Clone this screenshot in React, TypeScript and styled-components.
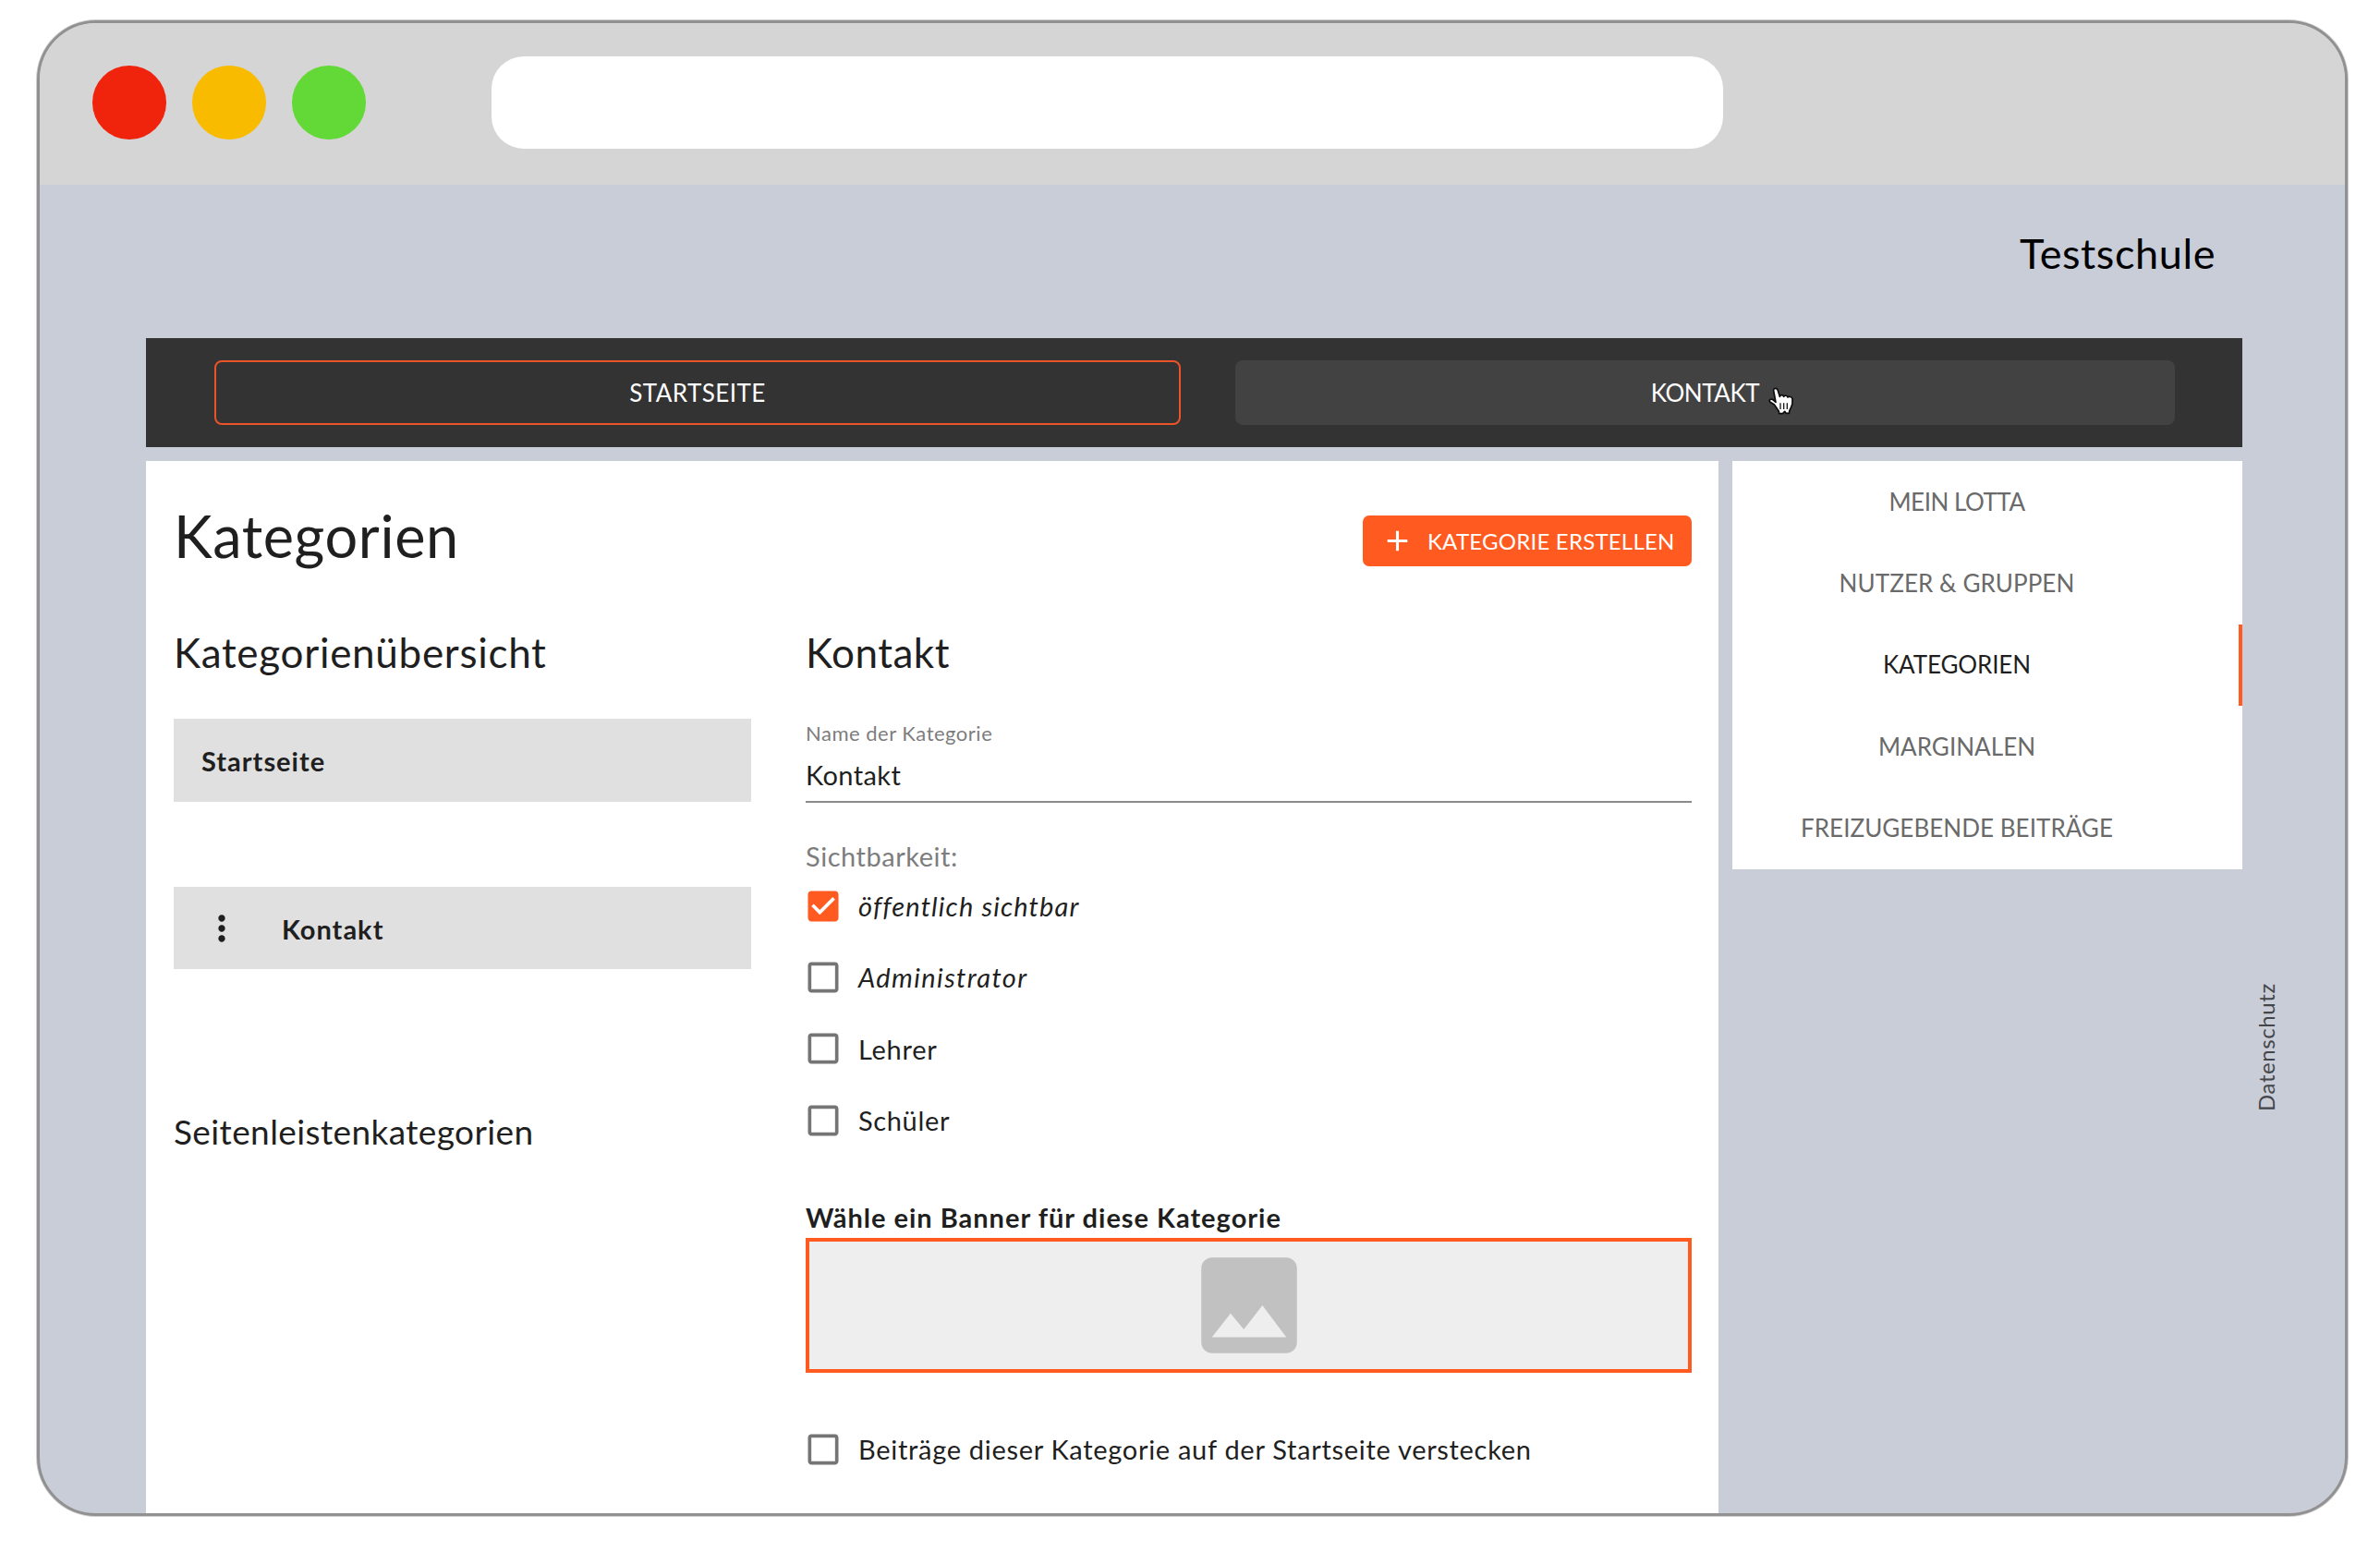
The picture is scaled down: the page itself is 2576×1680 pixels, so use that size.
import React from "react";
import styled, { createGlobalStyle } from "styled-components";

const orange = "#ff5a1f";
const ink = "#1f1f1f";

const GlobalStyle = createGlobalStyle`
  * { box-sizing: border-box; }
  body {
    margin: 0;
    background: #fff;
    color: ${ink};
    font-family: Lato, "Open Sans", sans-serif;
  }
  h1, h2, h3, p { margin: 0; font-weight: 400; }
`;

const Page = styled.div`
  width: 2576px;
  height: 1680px;
  padding: 22px 0 0 40px;
  overflow: hidden;
`;

const BrowserWindow = styled.div`
  width: 2501px;
  height: 1619px;
  display: flex;
  flex-direction: column;
  overflow: hidden;
  border: 3px solid #919191;
  border-radius: 64px;
  box-shadow: 0 0 0 1px #cfcfcf;
  background: #c9cdd8;
`;

const TitleBar = styled.header`
  flex: none;
  height: 175px;
  display: flex;
  align-items: center;
  gap: 28.5px;
  padding: 0 0 3px 57px;
  background: #d5d5d5;
`;

const Light = styled.span<{ $color: string }>`
  width: 79.5px;
  height: 79.5px;
  border-radius: 50%;
  background: ${(p) => p.$color};
`;

const AddressBar = styled.div`
  width: 1333px;
  height: 100px;
  margin-left: 108px;
  border-radius: 35px;
  background: #fff;
`;

const Site = styled.div`
  flex: 1;
  min-height: 0;
  display: flex;
  flex-direction: column;
  padding-left: 115px;
`;

const Brand = styled.div`
  flex: none;
  width: 2269px;
  height: 166px;
  padding: 49px 29px 0 0;
  text-align: right;
  font-size: 45px;
  line-height: 50px;
  letter-spacing: 0.6px;
  color: #000;
`;

const NavBar = styled.nav`
  flex: none;
  width: 2269px;
  height: 118px;
  display: grid;
  grid-template-columns: 1046px 1017px;
  gap: 59px;
  padding: 24px 73px 24px 74px;
  margin-bottom: 15px;
  background: #333;
`;

const NavButton = styled.a<{ $current?: boolean; $track: number }>`
  position: relative;
  display: flex;
  align-items: center;
  justify-content: center;
  padding-bottom: 1px;
  border: 2px solid ${(p) => (p.$current ? "#eb5328" : "#424242")};
  border-radius: 8px;
  background: ${(p) => (p.$current ? "transparent" : "#424242")};
  color: #fff;
  font-size: 26px;
  letter-spacing: ${(p) => p.$track}px;
`;

const Pointer = styled.svg`
  position: absolute;
  left: 561px;
  top: 13px;
  width: 60px;
  height: 60px;
`;

const Columns = styled.div`
  flex: 1;
  min-height: 0;
  display: flex;
  align-items: flex-start;
`;

const Main = styled.main`
  width: 1702px;
  height: 100%;
  margin-right: 15px;
  padding: 41px 29px 0 30px;
  background: #fff;
`;

const TitleRow = styled.div`
  height: 80px;
  display: flex;
  justify-content: space-between;
  align-items: flex-start;
  margin-bottom: 59px;
`;

const PageTitle = styled.h1`
  font-size: 63px;
  line-height: 80px;
  letter-spacing: 0.62px;
`;

const CreateButton = styled.button`
  width: 356px;
  height: 55px;
  margin-top: 18px;
  display: flex;
  align-items: center;
  gap: 14px;
  padding: 0 0 0 19px;
  border: 0;
  border-radius: 7px;
  background: ${orange};
  color: #fff;
  font-family: inherit;
  font-size: 24px;
  letter-spacing: 0.22px;
  white-space: nowrap;
`;

const Editor = styled.div`
  display: grid;
  grid-template-columns: 625px 959px;
  gap: 59px;
`;

const Column = styled.section`
  display: flex;
  flex-direction: column;
`;

const Heading = styled.h2<{ $track: number }>`
  font-size: 44px;
  line-height: 54px;
  letter-spacing: ${(p) => p.$track}px;
`;

const Entry = styled.div<{ $gap: number; $height: number }>`
  height: ${(p) => p.$height}px;
  margin-top: ${(p) => p.$gap}px;
  padding: 1px 0 0 30px;
  display: flex;
  align-items: center;
  gap: 43px;
  background: #e0e0e0;
  font-size: 29px;
  font-weight: 700;
  letter-spacing: 1px;
`;

const SubHeading = styled.h3`
  margin-top: 154px;
  font-size: 37px;
  line-height: 44px;
  letter-spacing: 0.4px;
`;

const FieldLabel = styled.label`
  margin-top: 48px;
  font-size: 22px;
  line-height: 26px;
  letter-spacing: 0.5px;
  color: #7d7d7d;
`;

const FieldValue = styled.div`
  margin-top: 14px;
  padding-bottom: 10px;
  border-bottom: 2px solid #8b8b8b;
  font-size: 29px;
  line-height: 36px;
  letter-spacing: 0.4px;
`;

const Legend = styled.p`
  margin-top: 43px;
  font-size: 29px;
  line-height: 30px;
  letter-spacing: 0.54px;
  color: #7d7d7d;
`;

const CheckRow = styled.label<{ $italic?: boolean; $track: number; $gap?: number }>`
  height: 77.3px;
  margin: ${(p) => p.$gap ?? 0}px 0 0 -3px;
  display: flex;
  align-items: center;
  gap: 16px;
  font-size: 29px;
  font-style: ${(p) => (p.$italic ? "italic" : "normal")};
  letter-spacing: ${(p) => p.$track}px;
  white-space: nowrap;
`;

const BannerLabel = styled.p`
  margin-top: 49px;
  font-size: 29px;
  font-weight: 700;
  line-height: 36px;
  letter-spacing: 0.99px;
`;

const Banner = styled.div`
  height: 146px;
  margin-top: 4px;
  display: flex;
  align-items: center;
  justify-content: center;
  border: 4px solid ${orange};
  background: #eee;
`;

const Sidebar = styled.aside`
  width: 552px;
  background: #fff;
`;

const Tab = styled.a<{ $active?: boolean; $track: number }>`
  height: 88.4px;
  display: flex;
  align-items: center;
  justify-content: center;
  padding: 0 ${(p) => (p.$active ? 62 : 66)}px 1px 0;
  border-right: ${(p) => (p.$active ? `4px solid ${orange}` : "0")};
  color: ${(p) => (p.$active ? ink : "#6a6a6a")};
  font-size: 26px;
  letter-spacing: ${(p) => p.$track}px;
`;

const PrivacyLink = styled.a`
  margin: 565px 0 0 11px;
  writing-mode: vertical-rl;
  transform: rotate(180deg);
  font-size: 24px;
  line-height: 30px;
  letter-spacing: 0.6px;
  color: #444649;
`;

const Glyph = styled.svg`
  flex: none;
`;

const Icon = ({ size, color, d }: { size: number; color: string; d: string }) => (
  <Glyph width={size} height={size} viewBox="0 0 24 24" fill={color}>
    <path d={d} />
  </Glyph>
);

const icons = {
  add: "M19 13h-6v6h-2v-6H5v-2h6V5h2v6h6v2z",
  more: "M12 8c1.1 0 2-.9 2-2s-.9-2-2-2-2 .9-2 2 .9 2 2 2zm0 2c-1.1 0-2 .9-2 2s.9 2 2 2 2-.9 2-2-.9-2-2-2zm0 6c-1.1 0-2 .9-2 2s.9 2 2 2 2-.9 2-2-.9-2-2-2z",
  checked:
    "M19 3H5c-1.11 0-2 .9-2 2v14c0 1.1.89 2 2 2h14c1.11 0 2-.9 2-2V5c0-1.1-.89-2-2-2zm-9 14l-5-5 1.41-1.41L10 14.17l7.59-7.59L19 8l-9 9z",
  unchecked:
    "M19 5v14H5V5h14m0-2H5c-1.1 0-2 .9-2 2v14c0 1.1.9 2 2 2h14c1.1 0 2-.9 2-2V5c0-1.1-.9-2-2-2z",
  image:
    "M21 19V5c0-1.1-.9-2-2-2H5c-1.1 0-2 .9-2 2v14c0 1.1.9 2 2 2h14c1.1 0 2-.9 2-2zM8.5 13.5l2.5 3.01L14.5 12l4.5 6H5l3.5-4.5z",
};

const groups = [
  { label: "öffentlich sichtbar", checked: true, italic: true, track: 1.15 },
  { label: "Administrator", italic: true, track: 1.38 },
  { label: "Lehrer", track: 0.72 },
  { label: "Schüler", track: 0.65 },
];

const tabs = [
  { label: "MEIN LOTTA", track: -0.48 },
  { label: "NUTZER & GRUPPEN", track: 0.08 },
  { label: "KATEGORIEN", track: -0.12, active: true },
  { label: "MARGINALEN", track: 0.04 },
  { label: "FREIZUGEBENDE BEITRÄGE", track: 0.04 },
];

const Check = ({ on }: { on?: boolean }) => (
  <Icon size={44} color={on ? orange : "#757575"} d={on ? icons.checked : icons.unchecked} />
);

const HandPointer = () => (
  <Pointer viewBox="0 0 180 180">
    <path
      d="M59 54C57 45 70 43 73 53L79 73C80 66 90 66 92 73C94 68 103 69 105 75C108 71 118 73 120 80C121 92 120 100 116 107C112 114 110 119 109 127H99L95 121L89 128H77L76 120C69 112 66 104 60 98L47 90C42 83 51 79 58 84L66 91Z"
      fill="#fff"
      stroke="#0c0c0c"
      strokeWidth="5"
      strokeLinejoin="round"
    />
    <path d="M81 94V114M92 94V114M103 94V114" stroke="#1a1a1a" strokeWidth="4" />
  </Pointer>
);

export default function App() {
  return (
    <Page>
      <GlobalStyle />
      <BrowserWindow>
        <TitleBar>
          <Light $color="#f0230d" />
          <Light $color="#f8bb00" />
          <Light $color="#62d937" />
          <AddressBar />
        </TitleBar>
        <Site>
          <Brand>Testschule</Brand>
          <NavBar>
            <NavButton $current $track={0.45}>STARTSEITE</NavButton>
            <NavButton $track={-0.44}>
              KONTAKT
              <HandPointer />
            </NavButton>
          </NavBar>
          <Columns>
            <Main>
              <TitleRow>
                <PageTitle>Kategorien</PageTitle>
                <CreateButton>
                  <Icon size={37} color="#fff" d={icons.add} />
                  KATEGORIE ERSTELLEN
                </CreateButton>
              </TitleRow>
              <Editor>
                <Column>
                  <Heading $track={0.7}>Kategorienübersicht</Heading>
                  <Entry $gap={45} $height={90}>Startseite</Entry>
                  <Entry $gap={92} $height={89}>
                    <Icon size={44} color={ink} d={icons.more} />
                    Kontakt
                  </Entry>
                  <SubHeading>Seitenleistenkategorien</SubHeading>
                </Column>
                <Column>
                  <Heading $track={0.51}>Kontakt</Heading>
                  <FieldLabel>Name der Kategorie</FieldLabel>
                  <FieldValue>Kontakt</FieldValue>
                  <Legend>Sichtbarkeit:</Legend>
                  {groups.map((g) => (
                    <CheckRow key={g.label} $italic={g.italic} $track={g.track}>
                      <Check on={g.checked} />
                      {g.label}
                    </CheckRow>
                  ))}
                  <BannerLabel>Wähle ein Banner für diese Kategorie</BannerLabel>
                  <Banner>
                    <Icon size={138} color="#c1c1c1" d={icons.image} />
                  </Banner>
                  <CheckRow $track={0.7} $gap={44}>
                    <Check />
                    Beiträge dieser Kategorie auf der Startseite verstecken
                  </CheckRow>
                </Column>
              </Editor>
            </Main>
            <Sidebar>
              {tabs.map((t) => (
                <Tab key={t.label} $active={t.active} $track={t.track}>
                  {t.label}
                </Tab>
              ))}
            </Sidebar>
            <PrivacyLink>Datenschutz</PrivacyLink>
          </Columns>
        </Site>
      </BrowserWindow>
    </Page>
  );
}
